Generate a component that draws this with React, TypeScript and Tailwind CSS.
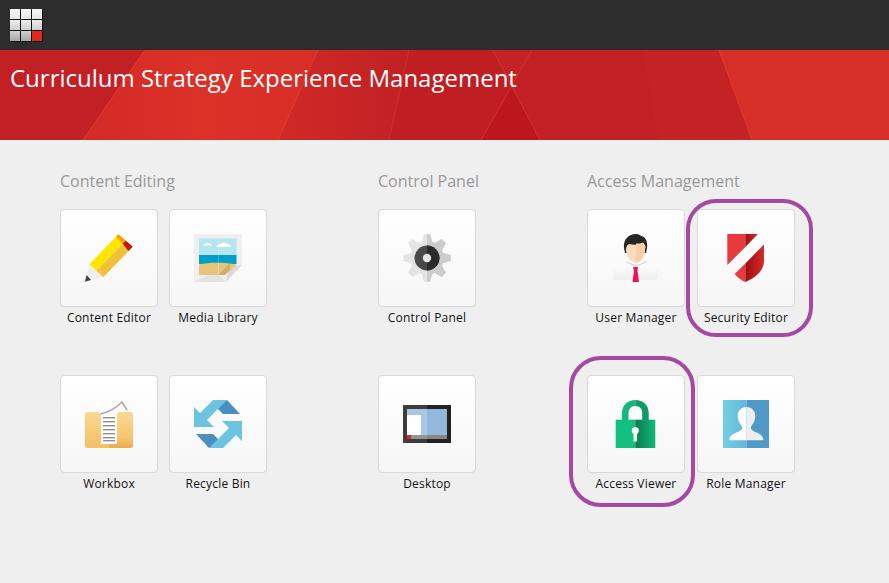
import { ReactNode } from "react";

const Tile = ({ label, icon, highlight }: { label: string; icon: ReactNode; highlight?: string }) => (
  <div className="relative w-[98px]">
    <div className="w-[98px] h-[98px] flex items-center justify-center rounded-[4px] border border-[#d9d9d9] bg-gradient-to-b from-white to-[#f6f6f6]">
      <svg viewBox="0 0 48 48" className="w-[48px] h-[48px]">
        {icon}
      </svg>
    </div>
    <div className="mt-[2px] h-[18px] whitespace-nowrap text-center text-[12px] leading-[18px] tracking-[0.2px] text-[#111111] flex justify-center">
      {label}
    </div>
    {highlight && <div className={`absolute border-4 border-[#a349a4] ${highlight}`} />}
  </div>
);

const Pencil = (
  <>
    <polygon points="4.3,30.3 33.3,0.3 40.5,7 11,37" fill="#ffe600" />
    <polygon points="11,37 40.5,7 47.7,12.7 18.3,43.3" fill="#efc23a" />
    <polygon points="33.3,0.3 41,6.7 37.7,9.5 31,3" fill="#fd9e00" />
    <polygon points="41,6.7 47.7,12.7 43.3,17 37.7,9.5" fill="#c5130f" />
    <polygon points="4.3,30.3 18.3,43.3 0,47.7" fill="#eeeeee" />
    <polygon points="1.6,41 6,46 0,47.7" fill="#444444" />
  </>
);

const Media = (
  <>
    <polygon points="0,0 48,0 48,31 32,48 0,48" fill="#efefef" />
    <polygon points="48,31 32,48 35,33" fill="#dadada" />
    <polygon points="0,48 16,41 24,41 32,48" fill="#e2e2e2" />
    <rect x="5" y="4.5" width="37.5" height="17" fill="#b4e6f0" />
    <rect x="5" y="21" width="37.5" height="9" fill="#00a0c8" />
    <path d="M5 30.500C14 28.500 30 28 42.500 30.500V31L31 41H5z" fill="#e8c47a" />
    <path d="M22 13h15c0-2-2-3-4-3-2-2-5-2-6 0-2 0-4 1-5 3z" fill="#ffffff" />
    <path d="M9 11.500h9c-1-2-2-2-3-2-1-1-3-1-4 .5-1 0-2 .5-2 1.500z" fill="#ffffff" />
    <rect x="24" y="4.5" width="0.6" height="36.5" fill="#ffffff" opacity="0.4" />
    <polygon points="24,41 36,29 36,36 31,41" fill="#000000" opacity="0.1" />
  </>
);

const Workbox = (
  <>
    <defs>
      <linearGradient id="fold" x1="0" y1="0" x2="0" y2="1">
        <stop offset="0" stopColor="#f9d993" />
        <stop offset="1" stopColor="#f3bf64" />
      </linearGradient>
      <linearGradient id="fold-right" x1="0" y1="0" x2="0" y2="1">
        <stop offset="0" stopColor="#f9d993" />
        <stop offset="0.7" stopColor="#f5c670" />
        <stop offset="1" stopColor="#eea94a" />
      </linearGradient>
    </defs>
    <path d="M15 14C25 12 32 7 37 2L42 10" fill="none" stroke="#a8a8a8" strokeWidth="1.6" />
    <path d="M24 48H2a2 2 0 0 1-2-2V14a2 2 0 0 1 2-2h10q4 0 4 3h8z" fill="url(#fold)" />
    <path d="M24 48h22a2 2 0 0 0 2-2V14a2 2 0 0 0-2-2H36q-4 0-4 3h-8z" fill="url(#fold-right)" />
    <rect x="16" y="15" width="16" height="29" fill="#ffffff" />
    {[17, 21, 25, 29, 33, 37, 40].map((y) => (
      <rect key={y} x="18" y={y} width="12" height="1.4" fill="#8f8f8f" />
    ))}
  </>
);

const Recycle = (
  <>
    <polygon points="33,0 46,14 29,14 22,7" fill="#4b8fc0" />
    <polygon points="0,7 6,13 19,0 33,0 13,20 20,27 0,27" fill="#6cc5e0" />
    <polygon points="15,48 2,34 19,34 26,41" fill="#4b8fc0" />
    <polygon points="48,41 42,35 29,48 15,48 35,28 28,21 48,21" fill="#6cc5e0" />
  </>
);

const gearPoints = (() => {
  const pts: string[] = [];
  for (let i = 0; i < 8; i++) {
    const a = (i * Math.PI) / 4 - Math.PI / 2;
    const push = (r: number, d: number) =>
      pts.push(`${(24 + r * Math.cos(a + d)).toFixed(2)},${(24 + r * Math.sin(a + d)).toFixed(2)}`);
    push(17, -0.3);
    push(24, -0.13);
    push(24, 0.13);
    push(17, 0.3);
  }
  return pts.join(" ");
})();

const Gear = (
  <>
    <polygon points={gearPoints} fill="#e4e4e4" />
    <clipPath id="gear-right">
      <rect x="24" y="0" width="24" height="48" />
    </clipPath>
    <polygon points={gearPoints} fill="#cccccc" clipPath="url(#gear-right)" />
    <circle cx="24" cy="24" r="12.5" fill="#4a4a4a" />
    <path d="M24 11.5a12.5 12.5 0 0 1 0 25z" fill="#2b2b2b" />
    <circle cx="24" cy="24" r="4.2" fill="#e6e6e6" />
  </>
);

const Desktop = (
  <>
    <rect x="0" y="5" width="24" height="38" fill="#3d3d3d" />
    <rect x="24" y="5" width="24" height="38" fill="#222222" />
    <rect x="4" y="9" width="20" height="26" fill="#a6c8e6" />
    <rect x="24" y="9" width="20" height="26" fill="#94b8dc" />
    <rect x="4" y="15" width="14" height="20" fill="#ffffff" />
    <rect x="4" y="35" width="20" height="4" fill="#949494" />
    <rect x="24" y="35" width="20" height="4" fill="#868686" />
    <rect x="4" y="35" width="4" height="4" fill="#e0281f" />
  </>
);

const User = (
  <>
    <defs>
      <linearGradient id="shirt" x1="0" y1="0" x2="0" y2="1">
        <stop offset="0" stopColor="#ffffff" />
        <stop offset="1" stopColor="#eeeeee" />
      </linearGradient>
    </defs>
    <path d="M1 38c0-5 4-7 8-8l6-3h17l6 3c4 1 8 3 8 8v5q0 2-2 3H3q-2-1-2-3z" fill="url(#shirt)" />
    <path d="M14 28l10 4 10-4" fill="none" stroke="#b8b8b8" strokeWidth="0.7" />
    <path d="M12 14C11 5 17 0 24 0c3 0 4 1 5 2 4 0 7 5 6 12l-1 5H13z" fill="#262626" />
    <path d="M14 15c0-2 1-4 3-5 4 1 10 1 14-1 2 2 3 4 2 6 0 8-5 14-9 14s-10-6-10-14z" fill="#fcdcc0" />
    <path d="M24 9.500c3 0 5 0 7-1 2 2 3 4 2 6 0 8-5 14-9 14z" fill="#f8cfa8" />
    <polygon points="21,33 26,33 25.500,37 27,48 20.500,48 22,37" fill="#ef1060" />
  </>
);

const Shield = (
  <>
    <defs>
      <linearGradient id="shield-dark" x1="0" y1="0" x2="1" y2="0">
        <stop offset="0" stopColor="#9e0f10" />
        <stop offset="1" stopColor="#d42a2a" />
      </linearGradient>
    </defs>
    <polygon points="5.300,0 23.300,0 23.300,13 5.300,31" fill="#e83a3e" />
    <polygon points="23.300,0 36,0 23.300,13" fill="url(#shield-dark)" />
    <path d="M12.700 40L23.300 29.400V48C19 46 15.500 43.500 12.700 40z" fill="#e83a3e" />
    <path d="M23.300 29.400L42 10.500V27C42 37 33 44 23.300 48z" fill="url(#shield-dark)" />
  </>
);

const Lock = (
  <>
    <defs>
      <linearGradient id="lock-dark" x1="0" y1="0" x2="1" y2="0">
        <stop offset="0" stopColor="#0a7a4e" />
        <stop offset="1" stopColor="#14b87c" />
      </linearGradient>
    </defs>
    <path d="M10 20V13C10 5 16 0 23.300 0V6C19 6 16.500 9 16.500 13V20z" fill="#14b87c" />
    <path d="M36.700 20V13C36.700 5 31 0 23.300 0V6C28 6 30.200 9 30.200 13V20z" fill="#0f9b68" />
    <rect x="3.700" y="19.700" width="19.600" height="28.300" fill="#14c080" />
    <rect x="23.300" y="19.700" width="20" height="28.300" fill="url(#lock-dark)" />
    <circle cx="23.300" cy="30.500" r="3.500" fill="#ffffff" />
    <rect x="21.500" y="31" width="3.600" height="10.500" fill="#ffffff" />
  </>
);

const Role = (
  <g transform="translate(1 0)">
    <defs>
      <linearGradient id="role-left" x1="0" y1="0" x2="1" y2="0">
        <stop offset="0" stopColor="#74cfe4" />
        <stop offset="1" stopColor="#62b8d8" />
      </linearGradient>
    </defs>
    <rect x="0" y="0" width="23.500" height="48" fill="url(#role-left)" />
    <rect x="23.500" y="0" width="22.500" height="48" fill="#4f9ac6" />
    <path d="M23.500 7C18 7 14.700 11 14.700 16c0 4 2 8 4 10 1 2 0 4-2 5-4 2-9 3-10.400 8v1.300h17.200z" fill="#ffffff" />
    <path d="M23.500 7C29 7 32.300 11 32.300 16c0 4-2 8-4 10-1 2 0 4 2 5 4 2 9 3 10 8v1.300h-16.800z" fill="#eeeeee" />
  </g>
);

const GroupTitle = ({ children }: { children: ReactNode }) => (
  <h2 className="h-[40px] text-[16px] leading-[24px] font-normal text-[#999999] whitespace-nowrap">{children}</h2>
);

const cellClass = "w-[10px] h-[10px]";

const App = () => {
  return (
    <div className="w-[889px] h-[583px] overflow-hidden bg-[#efefef] font-['Open_Sans',sans-serif]">
      <div className="h-[50px] bg-[#2d2d2d] pl-[10px] pt-[9px]">
        <div className="grid grid-cols-[10px_10px_10px] gap-[1px] w-[32px] [filter:drop-shadow(1px_1px_0_#111111)]">
          <div className={`${cellClass} bg-gradient-to-b from-[#f6f6f6] to-[#e6e6e6]`} />
          <div className={`${cellClass} bg-gradient-to-b from-[#f6f6f6] to-[#e6e6e6]`} />
          <div className={`${cellClass} bg-gradient-to-b from-[#f6f6f6] to-[#e6e6e6]`} />
          <div className={`${cellClass} bg-gradient-to-b from-[#ececec] to-[#cfcfcf]`} />
          <div className={`${cellClass} bg-gradient-to-b from-[#ececec] to-[#cfcfcf]`} />
          <div className={`${cellClass} bg-gradient-to-b from-[#ececec] to-[#cfcfcf]`} />
          <div className={`${cellClass} bg-gradient-to-b from-[#cfcfcf] to-[#a8a8a8]`} />
          <div className={`${cellClass} bg-gradient-to-b from-[#cfcfcf] to-[#a8a8a8]`} />
          <div className={`${cellClass} bg-[#e0281f]`} />
        </div>
      </div>

      <div className="relative h-[90px] bg-[#c32025] overflow-hidden">
        <svg viewBox="0 0 889 90" className="absolute inset-0 w-[889px] h-[90px]">
          <defs>
            <linearGradient id="band-light" x1="0" y1="0" x2="1" y2="0">
              <stop offset="0" stopColor="#d22a27" />
              <stop offset="0.5" stopColor="#dc3127" />
              <stop offset="1" stopColor="#d82e27" />
            </linearGradient>
            <linearGradient id="band-mid" x1="0" y1="0" x2="1" y2="0">
              <stop offset="0" stopColor="#d02a27" />
              <stop offset="1" stopColor="#c12024" />
            </linearGradient>
          </defs>
          <polygon points="145,0 318,0 278,90 83,90" fill="url(#band-light)" />
          <polygon points="318,0 409,0 389,90 278,90" fill="url(#band-mid)" />
          <polygon points="409,0 493,0 512,38 481,90 389,90" fill="#c01e22" />
          <polygon points="512,38 540,90 481,90" fill="#bb171d" />
          <polygon points="493,0 532,0 512,38" fill="#c52226" />
          <polygon points="719,0 889,0 889,90 752,90" fill="#d62f27" />
          <polygon points="643,0 719,0 752,90 658,90" fill="#c52225" />
          <g fill="none" strokeWidth="1">
            <line x1="145" y1="0" x2="83" y2="90" stroke="#df3d2d" />
            <line x1="318" y1="0" x2="278" y2="90" stroke="#df3d2d" />
            <line x1="409" y1="0" x2="389" y2="90" stroke="#cf3029" />
            <line x1="493" y1="0" x2="540" y2="90" stroke="#d0332a" />
            <line x1="532" y1="0" x2="481" y2="90" stroke="#d0332a" />
            <line x1="719" y1="0" x2="752" y2="90" stroke="#df3d2d" />
          </g>
        </svg>
        <h1 className="relative pl-[10px] pt-[10px] text-[24px] leading-[36px] font-normal text-white whitespace-nowrap">
          Curriculum Strategy Experience Management
        </h1>
      </div>

      <div className="flex gap-[111px] pl-[60px] pt-[29px]">
        <div className="w-[207px]">
          <GroupTitle>Content Editing</GroupTitle>
          <div className="grid grid-cols-[98px_98px] gap-x-[11px] gap-y-[48px]">
            <Tile label="Content Editor" icon={Pencil} />
            <Tile label="Media Library" icon={Media} />
            <Tile label="Workbox" icon={Workbox} />
            <Tile label="Recycle Bin" icon={Recycle} />
          </div>
        </div>
        <div className="w-[98px]">
          <GroupTitle>Control Panel</GroupTitle>
          <div className="grid grid-cols-[98px] gap-y-[48px]">
            <Tile label="Control Panel" icon={Gear} />
            <Tile label="Desktop" icon={Desktop} />
          </div>
        </div>
        <div className="w-[208px]">
          <GroupTitle>Access Management</GroupTitle>
          <div className="grid grid-cols-[98px_98px] gap-x-[12px] gap-y-[48px]">
            <Tile label="User Manager" icon={User} />
            <Tile label="Security Editor" icon={Shield} highlight="left-[-11px] top-[-10px] w-[127px] h-[138px] rounded-[30px]" />
            <Tile label="Access Viewer" icon={Lock} highlight="left-[-18px] top-[-19px] w-[126px] h-[151px] rounded-[32px]" />
            <Tile label="Role Manager" icon={Role} />
          </div>
        </div>
      </div>
    </div>
  );
};

export default App;
